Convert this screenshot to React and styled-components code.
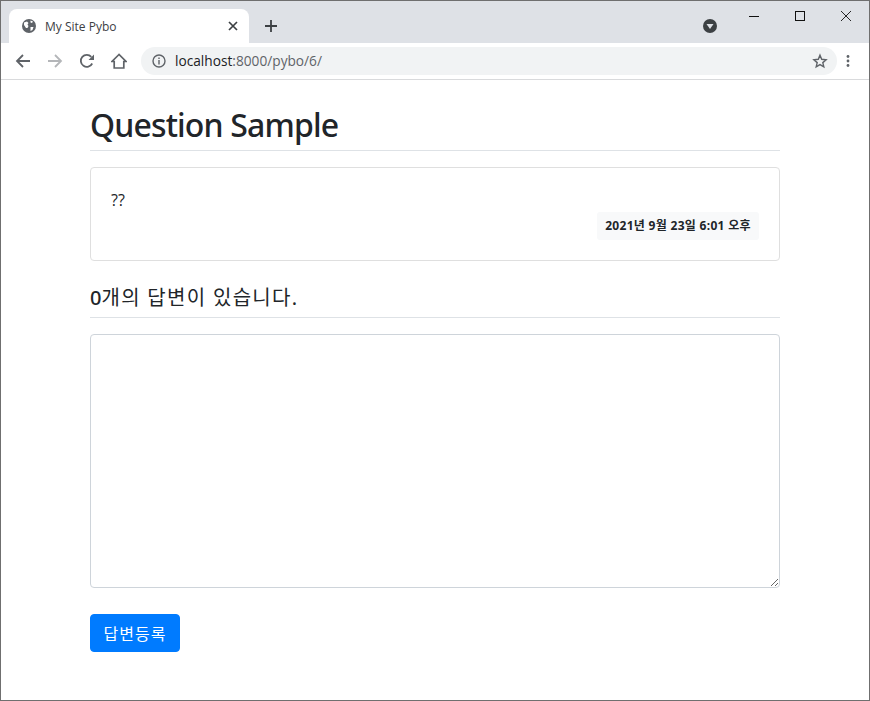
import React from "react"
import styled, { createGlobalStyle } from "styled-components"

const Global = createGlobalStyle`
  html, body { margin: 0; padding: 0; background: #fff; }
  * { box-sizing: border-box; }
`

const Win = styled.div`
  width: 870px;
  height: 701px;
  border: 1px solid #6f6f6f;
  overflow: hidden;
  display: flex;
  flex-direction: column;
  background: #fff;
  font-family: "Noto Sans", "Noto Sans CJK KR", sans-serif;
`
const TabStrip = styled.div`
  height: 42px;
  flex: none;
  background: #dee1e6;
  display: flex;
  align-items: flex-end;
  padding-left: 8px;
`
const Tab = styled.div`
  width: 240px;
  height: 34px;
  background: #fff;
  border-radius: 8px 8px 0 0;
  display: flex;
  align-items: center;
  padding: 0 11px 0 12px;
  font-size: 12px;
  color: #3c4043;
  gap: 8px;
`
const TabTitle = styled.span`
  flex: 1;
  font-family: "Open Sans", sans-serif;
`
const NewTab = styled.div`
  margin: 0 0 0 16px;
  height: 34px;
  display: flex;
  align-items: center;
`
const Spacer = styled.div`
  flex: 1;
`
const Profile = styled.div`
  height: 34px;
  display: flex;
  align-items: center;
  margin-right: 14px;
`
const WinControls = styled.div`
  align-self: flex-start;
  display: flex;
  height: 30px;
`
const WinButton = styled.div`
  width: 46px;
  height: 30px;
  display: flex;
  align-items: center;
  justify-content: center;
`
const Toolbar = styled.div`
  height: 37px;
  flex: none;
  display: flex;
  align-items: center;
  border-bottom: 1px solid #d9dadc;
  padding: 0 19px 1px 12px;
`
const NavIcon = styled.div`
  width: 20px;
  height: 20px;
  margin-right: ${p => p.$gap}px;
  display: flex;
  align-items: center;
  justify-content: center;
`
const Omnibox = styled.div`
  flex: 1;
  height: 28px;
  margin-left: 1px;
  margin-right: 9px;
  border-radius: 14px;
  background: #f1f3f4;
  display: flex;
  align-items: center;
  padding: 0 9px 0 11px;
  gap: 9px;
  font-family: "Open Sans", sans-serif;
  font-size: 13.7px;
  color: #5f6368;
`
const Url = styled.span`
  flex: 1;
  & b {
    font-weight: 400;
    color: #202124;
  }
`
const Container = styled.main`
  width: 690px;
  margin-left: 89px;
  color: #212529;
`
const Title = styled.h2`
  margin: 0;
  height: 71px;
  padding-top: 21px;
  font-size: 32px;
  line-height: 48px;
  font-weight: 500;
  letter-spacing: -0.85px;
  border-bottom: 1px solid #dee2e6;
`
const Card = styled.div`
  margin-top: 16px;
  height: 94px;
  border: 1px solid #dfdfdf;
  border-radius: 4px;
  padding: 20px;
  display: flex;
  flex-direction: column;
`
const CardText = styled.div`
  font-size: 16px;
  line-height: 24px;
  font-family: "Open Sans", sans-serif;
`
const DateRow = styled.div`
  display: flex;
  justify-content: flex-end;
`
const DateBadge = styled.div`
  width: 162px;
  height: 28px;
  background: #f8f9fa;
  border-radius: 3px;
  font-size: 12px;
  font-weight: 700;
  line-height: 28px;
  letter-spacing: 0.3px;
  text-align: center;
`
const AnswerHead = styled.h5`
  margin: 18px 0 0;
  height: 39px;
  font-size: 20px;
  font-weight: 400;
  line-height: 30px;
  letter-spacing: 1.3px;
  padding-top: 4px;
  border-bottom: 1px solid #dee2e6;
`
const Count = styled.span`
  font-weight: 500;
  letter-spacing: 0;
`
const Form = styled.form`
  margin: 16px 0 0;
  display: flex;
  flex-direction: column;
  align-items: flex-start;
`
const Answer = styled.textarea`
  display: block;
  width: 690px;
  height: 254px;
  border: 1px solid #ced4da;
  border-radius: 4px;
  background: #fff;
  outline: none;
`
const Submit = styled.button`
  margin-top: 26px;
  width: 90px;
  height: 38px;
  border: 1px solid #007bff;
  border-radius: 4px;
  background: #007bff;
  color: #fff;
  font-family: inherit;
  font-size: 16px;
  letter-spacing: 1px;
  padding: 0;
`

const Globe = () => (
  <svg width="16" height="16" viewBox="0 0 16 16">
    <circle cx="8" cy="8" r="7" fill="#5f6368" />
    <path d="M3 4.5 6 3.5 7.5 5 6.5 6.5 7.5 8 6.5 10 5 10 3 7zM9.5 2.5 12 3.5 11 5 9.5 4.5zM9.5 9 12.5 9 11.5 12 9.5 13z" fill="#fff" />
  </svg>
)

const App = () => (
  <Win>
    <Global />
    <TabStrip>
      <Tab>
        <Globe />
        <TabTitle>My Site Pybo</TabTitle>
        <svg width="10" height="10" viewBox="0 0 10 10">
          <path d="M1 1 9 9M9 1 1 9" stroke="#3c4043" strokeWidth="1.7" />
        </svg>
      </Tab>
      <NewTab>
        <svg width="12" height="12" viewBox="0 0 12 12">
          <path d="M6 0V12M0 6H12" stroke="#3c4043" strokeWidth="1.8" />
        </svg>
      </NewTab>
      <Spacer />
      <Profile>
        <svg width="14" height="14" viewBox="0 0 14 14">
          <circle cx="7" cy="7" r="7" fill="#3c4043" />
          <path d="M3.5 5H10.5L7 10z" fill="#dee1e6" />
        </svg>
      </Profile>
      <WinControls>
        <WinButton>
          <svg width="10" height="10" viewBox="0 0 10 10">
            <path d="M0 5.5H10" stroke="#111" strokeWidth="1" />
          </svg>
        </WinButton>
        <WinButton>
          <svg width="10" height="10" viewBox="0 0 10 10">
            <rect x=".5" y=".5" width="9" height="9" fill="none" stroke="#111" />
          </svg>
        </WinButton>
        <WinButton>
          <svg width="10" height="10" viewBox="0 0 10 10">
            <path d="M0 0 10 10M10 0 0 10" stroke="#111" strokeWidth=".9" />
          </svg>
        </WinButton>
      </WinControls>
    </TabStrip>
    <Toolbar>
      <NavIcon $gap={12}>
        <svg width="16" height="16" viewBox="0 0 16 16">
          <path d="M15 8H2M8 2 2 8l6 6" fill="none" stroke="#5f6368" strokeWidth="1.8" />
        </svg>
      </NavIcon>
      <NavIcon $gap={12}>
        <svg width="16" height="16" viewBox="0 0 16 16">
          <path d="M1 8H14M8 2l6 6-6 6" fill="none" stroke="#b4b6b9" strokeWidth="1.8" />
        </svg>
      </NavIcon>
      <NavIcon $gap={12}>
        <svg width="16" height="16" viewBox="0 0 16 16">
          <path d="M13.2 10.5A6 6 0 1 1 12.3 3.8" fill="none" stroke="#5f6368" strokeWidth="1.8" />
          <path d="M15 1.5V7H9.5z" fill="#5f6368" />
        </svg>
      </NavIcon>
      <NavIcon $gap={11}>
        <svg width="16" height="16" viewBox="0 0 16 16">
          <path d="M8 1.5 1 8.5H3.2V15H12.8V8.5H15z" fill="none" stroke="#5f6368" strokeWidth="1.7" />
        </svg>
      </NavIcon>
      <Omnibox>
        <svg width="14" height="14" viewBox="0 0 14 14">
          <circle cx="7" cy="7" r="6" fill="none" stroke="#5f6368" strokeWidth="1.4" />
          <path d="M7 6V10.5M7 3.5V5" stroke="#5f6368" strokeWidth="1.4" />
        </svg>
        <Url><b>localhost</b>:8000/pybo/6/</Url>
        <svg width="16" height="16" viewBox="0 0 16 16">
          <path d="M8 2.2 9.7 6.3 14.1 6.7 10.8 9.6 11.8 13.9 8 11.6 4.2 13.9 5.2 9.6 1.9 6.7 6.3 6.3z" fill="none" stroke="#5f6368" strokeWidth="1.4" />
        </svg>
      </Omnibox>
      <svg width="4" height="14" viewBox="0 0 4 14">
        <circle cx="2" cy="2.5" r="1.4" fill="#5f6368" />
        <circle cx="2" cy="7" r="1.4" fill="#5f6368" />
        <circle cx="2" cy="11.5" r="1.4" fill="#5f6368" />
      </svg>
    </Toolbar>
    <Container>
      <Title>Question Sample</Title>
      <Card>
        <CardText>??</CardText>
        <DateRow>
          <DateBadge>2021년 9월 23일 6:01 오후</DateBadge>
        </DateRow>
      </Card>
      <AnswerHead><Count>0</Count>개의 답변이 있습니다.</AnswerHead>
      <Form onSubmit={e => e.preventDefault()}>
        <Answer />
        <Submit>답변등록</Submit>
      </Form>
    </Container>
  </Win>
)

export default App
